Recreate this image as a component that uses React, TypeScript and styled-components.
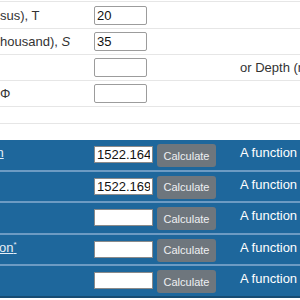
import React from 'react';
import styled, { createGlobalStyle } from 'styled-components';

const GlobalStyle = createGlobalStyle`
  html, body {
    margin: 0;
    padding: 0;
    background: #fff;
    overflow: hidden;
  }
  body {
    font-family: 'Liberation Sans', Arial, sans-serif;
    font-size: 13px;
    color: #333;
  }
`;

const COLUMNS = '94px 63px 83px 1fr';

const Page = styled.div`
  width: 300px;
  height: 300px;
  overflow: hidden;
  padding-top: 1px;
  box-sizing: border-box;
`;

const InputsTable = styled.div`
  border-top: 1px solid #e6e6e6;
  padding-top: 1px;
`;

const InputRow = styled.div<{ $short?: boolean }>`
  display: grid;
  grid-template-columns: ${COLUMNS};
  align-items: center;
  height: ${({ $short }) => ($short ? 16 : 25)}px;
  border-bottom: 1px solid #e6e6e6;
`;

const Label = styled.div`
  white-space: nowrap;
  overflow: hidden;
  line-height: 15px;
`;

const Var = styled.i`
  font-style: italic;
`;

const Note = styled.div`
  white-space: nowrap;
  line-height: 15px;
`;

const Field = styled.input`
  box-sizing: border-box;
  width: 53px;
  height: 19px;
  margin: 0;
  padding: 0 2px;
  border: 1px solid #9c9c9c;
  border-radius: 2px;
  background: #fff;
  font-family: 'Liberation Sans', Arial, sans-serif;
  font-size: 13px;
  color: #111;
  outline: none;
`;

const ResultsTable = styled.div`
  margin-top: 16px;
  background: #1e679c;
  border-bottom: 2px solid #174c73;
`;

const ResultRow = styled.div`
  display: grid;
  grid-template-columns: ${COLUMNS};
  align-items: start;
  height: 29.5px;
  border-bottom: 2px solid #6d9bc3;
  &:last-child {
    border-bottom: none;
  }
`;

const LinkLabel = styled.div<{ $shift: number }>`
  white-space: nowrap;
  overflow: hidden;
  padding-top: 5px;
  line-height: 15px;
  color: #e6eef6;
  a {
    color: inherit;
    text-decoration: underline;
    margin-left: ${({ $shift }) => $shift}px;
  }
  sup {
    font-size: 8px;
    line-height: 0;
  }
`;

const ResultField = styled(Field)`
  width: 59px;
  height: 17px;
  margin-top: 6px;
  border-radius: 0;
  border-color: #8a8a8a;
`;

const CalcButton = styled.button`
  box-sizing: border-box;
  width: 59px;
  height: 23px;
  margin-top: 4px;
  padding: 0;
  border: none;
  border-radius: 3px;
  background: #6e767d;
  color: #eef0f2;
  font-family: 'Liberation Sans', Arial, sans-serif;
  font-size: 11px;
`;

const Description = styled.div`
  white-space: nowrap;
  padding-top: 5px;
  line-height: 15px;
  color: #fff;
`;

const results = [
  { label: 'n', shift: -3.5, value: '1522.1644', star: false },
  { label: '', shift: 0, value: '1522.1696', star: false },
  { label: '', shift: 0, value: '', star: false },
  { label: 'on', shift: -1, value: '', star: true },
  { label: '', shift: 0, value: '', star: false },
];

export default function App() {
  return (
    <>
      <GlobalStyle />
      <Page>
        <InputsTable>
          <InputRow>
            <Label>sus), T</Label>
            <Field defaultValue="20" />
          </InputRow>
          <InputRow>
            <Label>
              housand), <Var>S</Var>
            </Label>
            <Field defaultValue="35" />
          </InputRow>
          <InputRow>
            <Label />
            <Field />
            <span />
            <Note>or Depth (m)</Note>
          </InputRow>
          <InputRow>
            <Label>Φ</Label>
            <Field />
          </InputRow>
          <InputRow $short />
        </InputsTable>
        <ResultsTable>
          {results.map((r, i) => (
            <ResultRow key={i}>
              <LinkLabel $shift={r.shift}>
                {r.label && (
                  <a href="#">
                    {r.label}
                    {r.star && <sup>*</sup>}
                  </a>
                )}
              </LinkLabel>
              <ResultField defaultValue={r.value} />
              <CalcButton>Calculate</CalcButton>
              <Description>A function of</Description>
            </ResultRow>
          ))}
        </ResultsTable>
      </Page>
    </>
  );
}
